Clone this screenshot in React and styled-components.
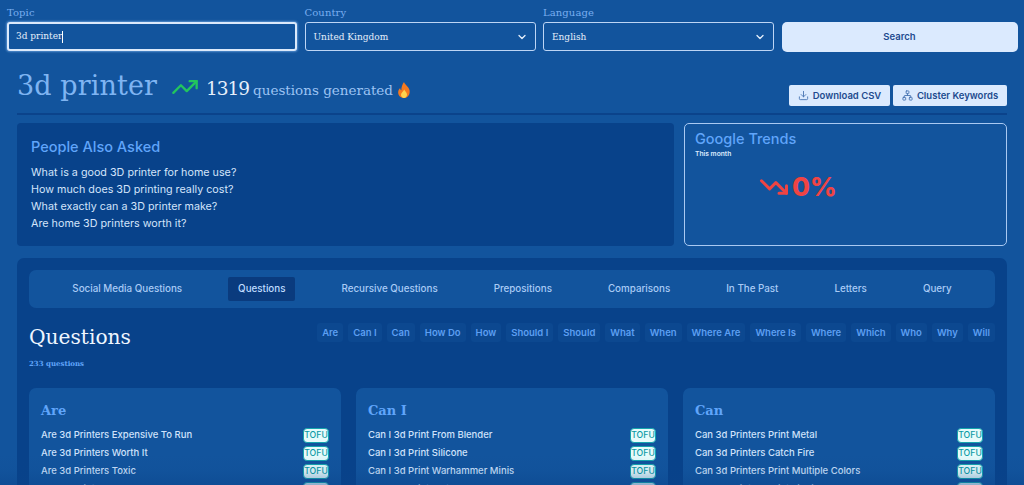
import React from "react";
import styled, { createGlobalStyle } from "styled-components";
import { ChevronDown, TrendingUp, TrendingDown, Download, Network } from "lucide-react";

const SERIF = `"DejaVu Serif", "Liberation Serif", serif`;
const SANS = `Inter, "Liberation Sans", sans-serif`;

const Global = createGlobalStyle`
  html, body { margin: 0; height: 485px; overflow: hidden; background: #12549d; }
  * { box-sizing: border-box; }
`;

const Page = styled.div`
  position: relative;
  width: 1024px;
  height: 485px;
  overflow: hidden;
  background: #12549d;
  font-family: ${SANS};
  padding: 6px 17px 0;
`;
const Fade = styled.div`
  position: absolute;
  left: 0; right: 0; bottom: 0;
  height: 30px;
  background: linear-gradient(to bottom, rgba(10,67,138,0), rgba(10,67,138,.1) 55%, rgba(10,67,138,.42));
  pointer-events: none;
`;
const Form = styled.div`
  display: grid;
  grid-template-columns: 290px 231px 231px 236px;
  gap: 7.5px;
  margin: 0 -10px;
`;
const Field = styled.div`
  display: flex;
  flex-direction: column;
  gap: 3px;
`;
const Label = styled.div`
  font: 400 10px/13px ${SERIF};
  color: #79aef0;
  height: 13px;
  letter-spacing: .1px;
`;
const Control = styled.div`
  display: flex;
  align-items: center;
  justify-content: space-between;
  height: 29px;
  padding: 0 ${p => (p.$focus ? "7px" : "8px")};
  border-radius: 3px;
  border: ${p => (p.$focus ? "2px solid #dbe9fb" : "1.5px solid #bdd5f5")};
  box-shadow: ${p => (p.$focus ? "0 0 2px 1px rgba(147,197,253,.5)" : "none")};
  background: #12549d;
  color: #e6effb;
  font: 400 9px/12px ${SERIF};
  & svg { width: 12px; height: 12px; margin-right: -1px; stroke-width: 2.6; }
`;
const Caret = styled.span`
  display: inline-block;
  width: 1px;
  height: 12px;
  background: #fff;
  vertical-align: middle;
`;
const SearchBtn = styled.div`
  height: 30px;
  margin-top: 16px;
  border-radius: 5px;
  background: #dbeafe;
  color: #1e4a8f;
  font: 600 9.5px/29px ${SANS};
  text-align: center;
`;
const TitleRow = styled.div`
  display: flex;
  align-items: flex-start;
  justify-content: space-between;
  height: 63px;
  padding-top: 17px;
  border-bottom: 2px solid #0b438b;
`;
const TitleLeft = styled.div`
  display: flex;
  align-items: baseline;
`;
const Title = styled.h1`
  margin: 0;
  font: 400 27px/34px ${SERIF};
  color: #7fb4f2;
  letter-spacing: .1px;
`;
const Arrow = styled(TrendingUp)`
  width: 28px;
  height: 28px;
  color: #22c55e;
  margin: 0 7px 0 14px;
  align-self: center;
  position: relative;
  top: 1px;
`;
const Count = styled.span`
  font: 400 18.5px/24px ${SERIF};
  color: #e6effb;
  letter-spacing: -1px;
  margin-right: 4px;
`;
const Generated = styled.span`
  display: inline-flex;
  align-items: center;
  gap: 4px;
  font: 400 13.5px/16px ${SERIF};
  color: #9cc3f3;
`;
const Actions = styled.div`
  display: flex;
  gap: 3px;
  margin-top: 16px;
`;
const ActionBtn = styled.div`
  display: flex;
  align-items: center;
  justify-content: center;
  gap: 4px;
  width: ${p => p.$w}px;
  height: 21px;
  border-radius: 2px;
  background: #dbeafe;
  color: #1e4a8f;
  font: 600 9.5px/21px ${SANS};
  & svg { width: 11px; height: 11px; color: #4a76b4; }
`;
const Summary = styled.div`
  display: grid;
  grid-template-columns: 657px 323px;
  grid-template-rows: 123px;
  gap: 10px;
  margin-top: 8px;
`;
const Paa = styled.section`
  background: #08428a;
  border-radius: 4px;
  padding: 15px 14px 0;
`;
const PaaTitle = styled.h2`
  margin: 0 0 8px;
  font: 500 14.5px/18px ${SANS};
  color: #60a5fa;
`;
const PaaItem = styled.div`
  font: 400 10.75px/17px ${SANS};
  color: #d3e4fb;
`;
const Trends = styled.section`
  border: 1.5px solid #a9c9f2;
  border-radius: 5px;
  padding: 6px 10px 0;
`;
const TrendsTitle = styled.h2`
  margin: 0 0 2px;
  font: 500 14.5px/18px ${SANS};
  color: #60a5fa;
`;
const TrendsSub = styled.div`
  font: 600 6.7px/9px ${SANS};
  color: #dbeafe;
`;
const TrendsValue = styled.div`
  display: flex;
  align-items: center;
  gap: 3px;
  margin: 13px 0 0 64px;
  font: 800 26px/30px ${SANS};
  color: #ef4444;
  & svg { width: 30px; height: 30px; stroke-width: 2.4; }
`;
const Main = styled.section`
  margin-top: 12px;
  height: 300px;
  background: #08428a;
  border-radius: 7px;
  padding: 12px;
`;
const Tabs = styled.nav`
  display: flex;
  justify-content: center;
  align-items: center;
  gap: 36px;
  height: 38px;
  border-radius: 7px;
  background: #12549d;
`;
const Tab = styled.div`
  padding: 0 10px;
  height: 24px;
  border-radius: 2px;
  font: 500 9.8px/24px ${SANS};
  white-space: nowrap;
  color: ${p => (p.$active ? "#bfdbfe" : "#a9cbf5")};
  background: ${p => (p.$active ? "#0a3b7e" : "transparent")};
`;
const Head = styled.div`
  display: flex;
  justify-content: space-between;
  align-items: flex-start;
  margin-top: 15px;
  height: 65px;
`;
const HeadTitle = styled.h2`
  margin: 1px 0 0;
  font: 400 20.2px/26px ${SERIF};
  color: #eff6ff;
`;
const HeadCount = styled.div`
  margin-top: 9px;
  font: 700 7px/10px ${SERIF};
  color: #60a5fa;
`;
const Chips = styled.div`
  display: flex;
  gap: 5px;
`;
const Chip = styled.div`
  padding: 0 5px;
  height: 19px;
  border-radius: 3px;
  background: #0c4890;
  color: #5d9ff2;
  font: 600 9.5px/19px ${SANS};
  white-space: nowrap;
`;
const Cards = styled.div`
  display: grid;
  grid-template-columns: repeat(3, 312px);
  gap: 15px;
`;
const Card = styled.article`
  background: #12549d;
  border-radius: 7px;
  padding: 14px 12px;
  height: 140px;
`;
const CardTitle = styled.h3`
  margin: 0 0 7px;
  font: 700 13px/17px ${SERIF};
  color: #60a5fa;
`;
const Row = styled.div`
  display: flex;
  align-items: center;
  justify-content: space-between;
  height: 18px;
  font: 500 9.5px/18px ${SANS};
  color: #cfe2fb;
`;
const Badge = styled.span`
  width: 26px;
  height: 15px;
  border-radius: 4px;
  border: 1px solid #14a4ad;
  background: #e6fbfb;
  color: #0d9aa5;
  font: 500 8.7px/13px ${SANS};
  text-align: center;
`;

const Fire = () => (
  <svg width="14" height="16" viewBox="0 0 14 16" aria-hidden="true">
    <path d="M7 0c.6 2.600 4.800 4.600 5.600 8.400C13.200 12.400 10.600 16 7 16S.8 13.200 1.200 9.800c.2-1.800 1.200-3 1.900-3.800.1 1.100.6 1.900 1.300 2.300C4.200 5.400 5.400 2.200 7 0z" fill="#f4791f" />
    <path d="M7.200 7.500c.4 1.500 2.800 2.600 2.800 5 0 2-1.400 3.500-3 3.500s-3-1.300-3-3.200c0-1.900 2.200-3 3.200-5.300z" fill="#fdd34d" />
  </svg>
);

const tabs = ["Social Media Questions", "Questions", "Recursive Questions", "Prepositions", "Comparisons", "In The Past", "Letters", "Query"];
const chips = ["Are", "Can I", "Can", "How Do", "How", "Should I", "Should", "What", "When", "Where Are", "Where Is", "Where", "Which", "Who", "Why", "Will"];
const cards = [
  { title: "Are", rows: ["Are 3d Printers Expensive To Run", "Are 3d Printers Worth It", "Are 3d Printers Toxic", "Are 3d Printers Easy To Use"] },
  { title: "Can I", rows: ["Can I 3d Print From Blender", "Can I 3d Print Silicone", "Can I 3d Print Warhammer Minis", "Can I 3d Print Metal"] },
  { title: "Can", rows: ["Can 3d Printers Print Metal", "Can 3d Printers Catch Fire", "Can 3d Printers Print Multiple Colors", "Can 3d Printers Print Liquid"] },
];
const paa = ["What is a good 3D printer for home use?", "How much does 3D printing really cost?", "What exactly can a 3D printer make?", "Are home 3D printers worth it?"];

export default function App() {
  return (
    <Page>
      <Global />
      <Form>
        <Field>
          <Label>Topic</Label>
          <Control $focus><span>3d printer<Caret /></span></Control>
        </Field>
        <Field>
          <Label>Country</Label>
          <Control>United Kingdom<ChevronDown /></Control>
        </Field>
        <Field>
          <Label>Language</Label>
          <Control>English<ChevronDown /></Control>
        </Field>
        <SearchBtn>Search</SearchBtn>
      </Form>
      <TitleRow>
        <TitleLeft>
          <Title>3d printer</Title>
          <Arrow />
          <Count>1319</Count>
          <Generated>questions generated<Fire /></Generated>
        </TitleLeft>
        <Actions>
          <ActionBtn $w={101}><Download />Download CSV</ActionBtn>
          <ActionBtn $w={114}><Network />Cluster Keywords</ActionBtn>
        </Actions>
      </TitleRow>
      <Summary>
        <Paa>
          <PaaTitle>People Also Asked</PaaTitle>
          {paa.map(q => <PaaItem key={q}>{q}</PaaItem>)}
        </Paa>
        <Trends>
          <TrendsTitle>Google Trends</TrendsTitle>
          <TrendsSub>This month</TrendsSub>
          <TrendsValue><TrendingDown />0%</TrendsValue>
        </Trends>
      </Summary>
      <Main>
        <Tabs>
          {tabs.map(t => <Tab key={t} $active={t === "Questions"}>{t}</Tab>)}
        </Tabs>
        <Head>
          <div>
            <HeadTitle>Questions</HeadTitle>
            <HeadCount>233 questions</HeadCount>
          </div>
          <Chips>{chips.map(c => <Chip key={c}>{c}</Chip>)}</Chips>
        </Head>
        <Cards>
          {cards.map(c => (
            <Card key={c.title}>
              <CardTitle>{c.title}</CardTitle>
              {c.rows.map(r => <Row key={r}>{r}<Badge>TOFU</Badge></Row>)}
            </Card>
          ))}
        </Cards>
      </Main>
      <Fade />
    </Page>
  );
}
